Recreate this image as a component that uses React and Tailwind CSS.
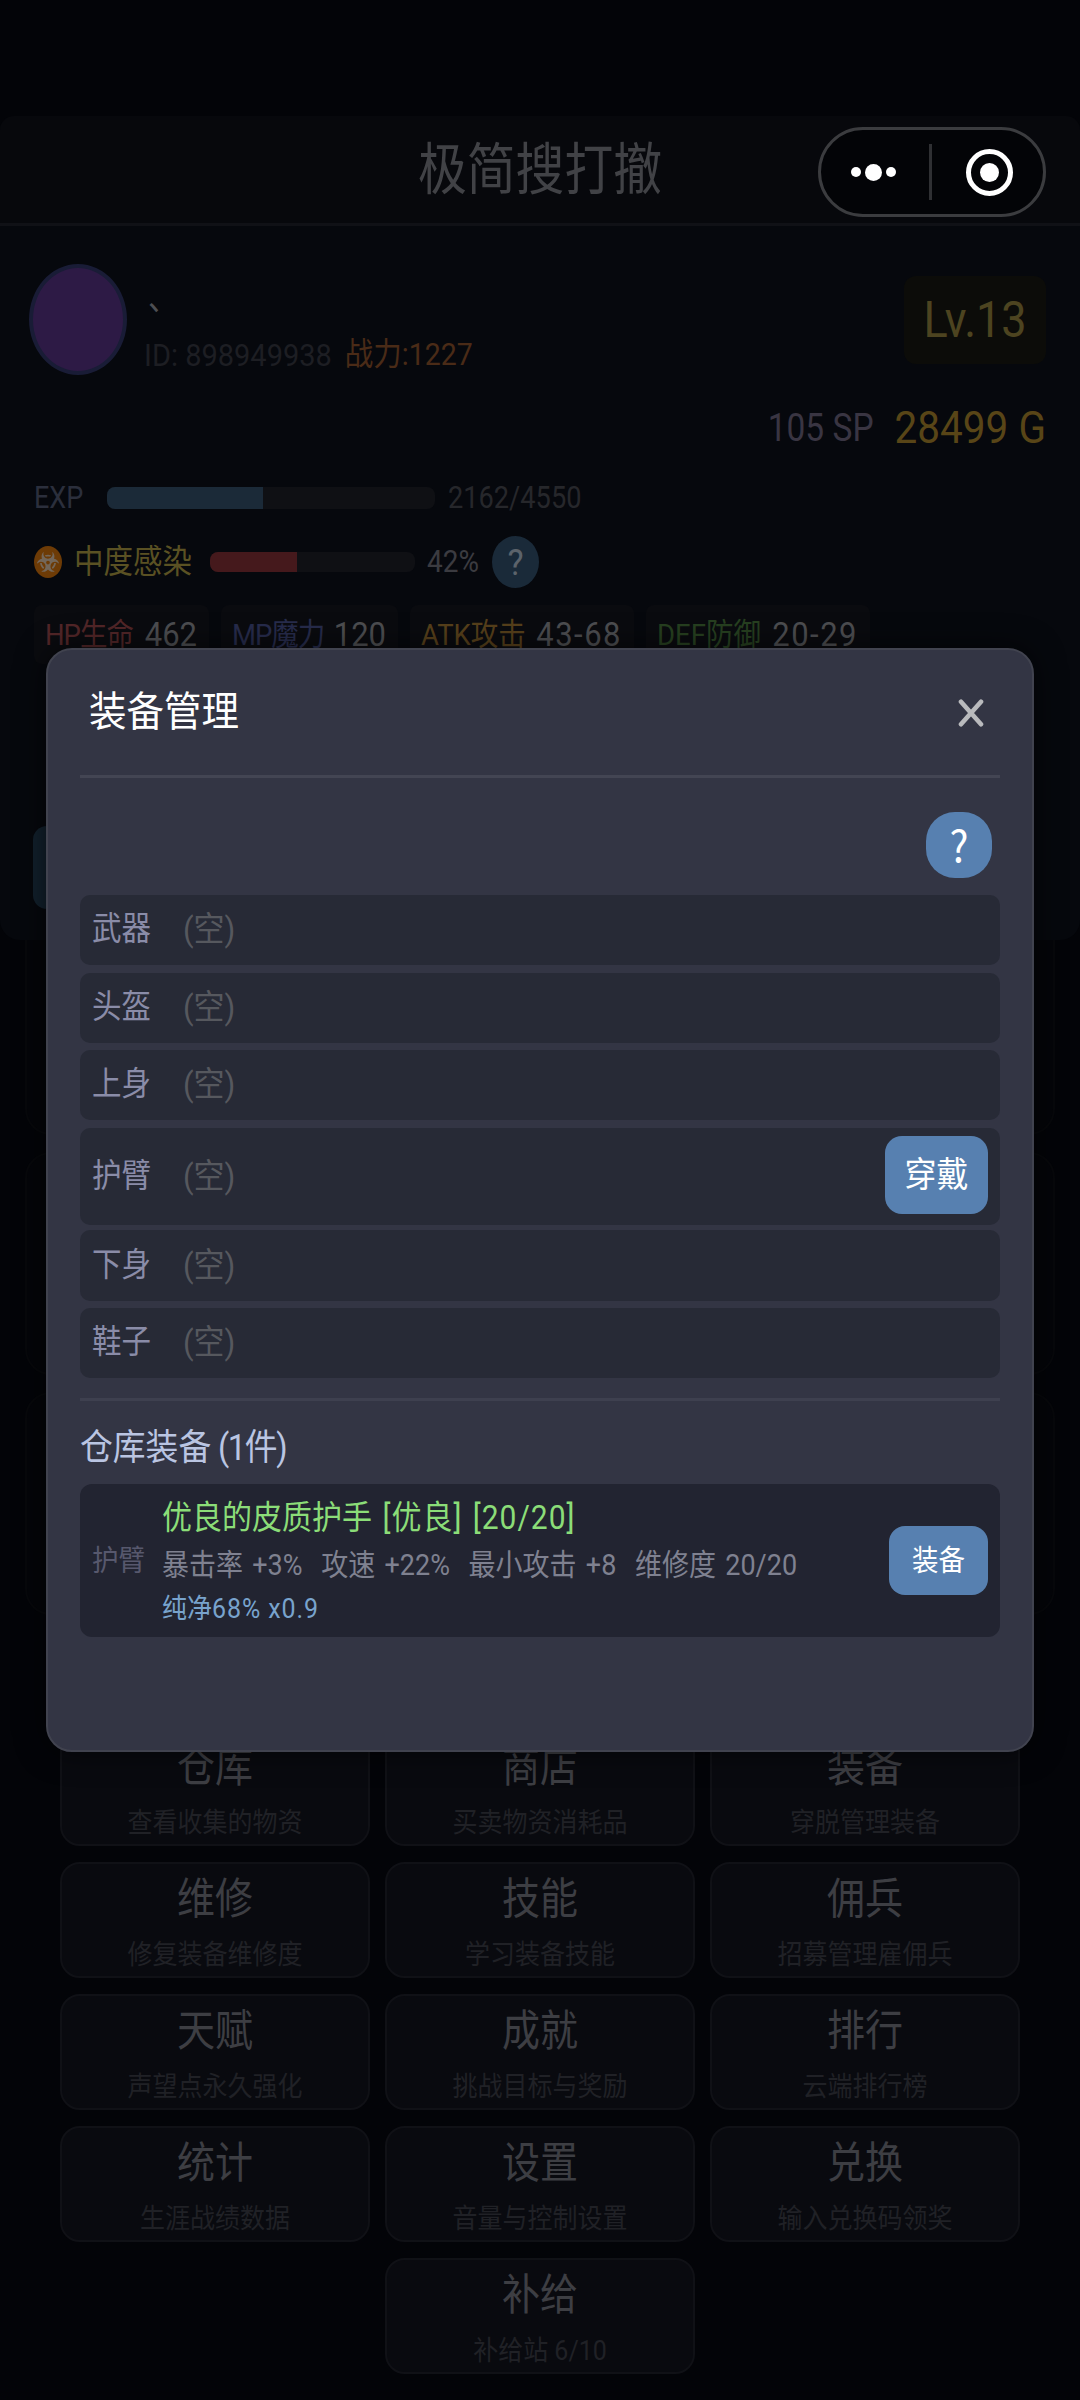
import clsx from 'clsx'
import { FaBiohazard } from 'react-icons/fa'

const STATS = [
  { label: 'HP生命', value: '462', color: 'text-[#522628] tracking-[-1px]', width: 'w-[175px]' },
  { label: 'MP魔力', value: '120', color: 'text-[#272c4c] tracking-[-1px]', width: 'w-[177px]' },
  { label: 'ATK攻击', value: '43-68', color: 'text-[#57401b]', width: 'w-[224px]', range: true },
  { label: 'DEF防御', value: '20-29', color: 'text-[#274020]', width: 'w-[224px]', range: true },
]

const SLOTS = [
  { name: '武器', size: 'h-[70px] mb-2' },
  { name: '头盔', size: 'h-[70px] mb-[7px]' },
  { name: '上身', size: 'h-[70px] mb-2' },
  { name: '护臂', size: 'h-[97px] mb-[5px]', wearable: true },
  { name: '下身', size: 'h-[71px] mb-[7px]' },
  { name: '鞋子', size: 'h-[70px]' },
]

const MENU = [
  { title: '仓库', desc: '查看收集的物资' },
  { title: '商店', desc: '买卖物资消耗品' },
  { title: '装备', desc: '穿脱管理装备' },
  { title: '维修', desc: '修复装备维修度' },
  { title: '技能', desc: '学习装备技能' },
  { title: '佣兵', desc: '招募管理雇佣兵' },
  { title: '天赋', desc: '声望点永久强化' },
  { title: '成就', desc: '挑战目标与奖励' },
  { title: '排行', desc: '云端排行榜' },
  { title: '统计', desc: '生涯战绩数据' },
  { title: '设置', desc: '音量与控制设置' },
  { title: '兑换', desc: '输入兑换码领奖' },
  { title: '补给', desc: '补给站 6/10', last: true },
]

function Text({ className, tall, children }) {
  return (
    <span
      className={clsx(
        'inline-block shrink-0 leading-none whitespace-pre',
        tall ? 'scale-y-[1.15]' : 'scale-y-110',
        className
      )}
    >
      {children}
    </span>
  )
}

function Capsule() {
  return (
    <div className="absolute left-[818px] top-[127px] flex h-[90px] w-[228px] items-center rounded-full border-[3px] border-[#3b3c3f] bg-[#030407]">
      <div className="flex w-[108px] items-center justify-center gap-1 pr-[3px]">
        <span className="size-[10px] rounded-full bg-white" />
        <span className="size-[17px] rounded-full bg-white" />
        <span className="size-[10px] rounded-full bg-white" />
      </div>
      <span className="h-14 w-[3px] bg-[#2f3033]" />
      <div className="flex flex-1 items-center justify-center pl-[4px]">
        <span className="flex size-[47px] items-center justify-center rounded-full border-[5px] border-white">
          <span className="size-[19px] rounded-full bg-white" />
        </span>
      </div>
    </div>
  )
}

function Profile() {
  return (
    <section className="h-[714px] rounded-b-[20px] bg-[#06080d] pt-[38px]">
      <div className="flex h-[111px] items-center pl-[29px] pr-[34px]">
        <div className="h-[111px] w-[98px] rounded-[50%] border-4 border-[#191c36] bg-[#2d1a45]" />
        <div className="ml-[17px] flex-1 pt-[14px]">
          <Text className="block h-[30px] pl-[4px] text-[30px] text-[#4d4e52]">、</Text>
          <div className="mt-[25px] flex items-center gap-[13px]">
            <Text className="text-[29px] text-[#1d1e23]">ID: 898949938</Text>
            <Text className="text-[28.5px] text-[#4a2b17]">战力:1227</Text>
          </div>
        </div>
        <div className="flex h-[88px] w-[142px] items-center justify-center rounded-xl bg-[#0c0c09]">
          <Text className="text-[45px] text-[#4d4420]">Lv.13</Text>
        </div>
      </div>

      <div className="mt-[33px] flex h-10 items-center justify-end gap-[21px] pr-[34px]">
        <Text tall className="text-[33.5px] text-[#393542]">105 SP</Text>
        <Text className="text-[40.5px] text-[#584517]">28499 G</Text>
      </div>

      <div className="mt-[35px] flex h-[30px] items-center pl-[34px]">
        <Text tall className="w-[73px] text-[27px] text-[#2b2f3c]">EXP</Text>
        <div className="h-[22px] w-[328px] overflow-hidden rounded-lg bg-[#0f1014]">
          <div className="h-full bg-[#1b2a38]" style={{ width: `${(2162 / 4550) * 100}%` }} />
        </div>
        <Text tall className="ml-[13px] mt-px text-[27.2px] text-[#26272b]">2162/4550</Text>
      </div>

      <div className="mt-[23px] flex h-[52px] items-center pl-[34px]">
        <div className="flex h-8 w-7 shrink-0 items-center justify-center rounded-[50%] bg-[#6d3b06]">
          <FaBiohazard className="size-[22px] text-[#73675a]" />
        </div>
        <Text className="ml-3 mt-[2px] w-[136px] text-[29.5px] text-[#5a5123]">中度感染</Text>
        <div className="h-5 w-[205px] overflow-hidden rounded-lg bg-[#0f1014]">
          <div className="h-full bg-[#45191c]" style={{ width: '42.5%' }} />
        </div>
        <Text tall className="ml-3 w-[65px] text-[28px] text-[#3b3b40]">42%</Text>
        <div className="flex h-[52px] w-[47px] items-center justify-center rounded-[50%] bg-[#1a2a39]">
          <Text className="text-[34px] text-[#5c636b]">?</Text>
        </div>
      </div>

      <div className="mt-[17px] flex gap-3 pl-[34px]">
        {STATS.map((s) => (
          <div
            key={s.label}
            className={clsx('flex h-[59px] items-center justify-between rounded-lg bg-[#0a0b0f] pl-[11px] pr-3', s.width)}
          >
            <Text className={clsx('text-[27.5px]', s.color)}>{s.label}</Text>
            <Text className={clsx('text-[31px] text-[#4d4e51]', s.range && 'tracking-[1.5px]')}>{s.value}</Text>
          </div>
        ))}
      </div>

      <div className="ml-[33px] mt-[162px] h-[83px] w-[220px] rounded-[14px] bg-[#12202c]" />
    </section>
  )
}

function MenuGrid() {
  return (
    <div className="mt-[115px] grid grid-cols-[310px_310px_310px] justify-center gap-x-[15px] gap-y-[16.1px]">
      {MENU.map((m) => (
        <div
          key={m.title}
          className={clsx(
            'flex h-[116px] flex-col items-center rounded-[20px] border-2 border-[#101116] bg-[#090a0f] pt-[16px]',
            m.last && 'col-start-2'
          )}
        >
          <Text tall className="text-[38px] text-[#3d3e43]">{m.title}</Text>
          <Text className="mt-[24px] text-[25px] text-[#202126]">{m.desc}</Text>
        </div>
      ))}
    </div>
  )
}

function EquipmentModal() {
  return (
    <div className="absolute left-[46px] top-[648px] h-[1104px] w-[988px] rounded-[26px] border-2 border-[#41434f] bg-[#333544] px-8 shadow-[0_0_30px_rgba(0,0,0,0.6)]">
      <div className="flex h-[128px] items-center justify-between border-b-3 border-[#434553] pl-[9px] pr-4">
        <Text className="mt-px text-[37.5px] text-white">装备管理</Text>
        <svg viewBox="0 0 26 28" className="h-7 w-[26px]" stroke="#b9babd" strokeWidth="4.6" strokeLinecap="round">
          <path d="M3 2.8 23 25.2M23 2.8 3 25.2" />
        </svg>
      </div>

      <div className="mt-[34px] flex justify-end pr-2">
        <button className="flex size-[66px] items-center justify-center rounded-[29px] bg-[#5780b0]">
          <Text className="mb-1 font-['Noto_Sans_CJK_SC',sans-serif] text-[40px] text-white">?</Text>
        </button>
      </div>

      <div className="mt-[17px]">
        {SLOTS.map((slot) => (
          <div key={slot.name} className={clsx('flex items-center rounded-[10px] bg-[#272a36] px-3', slot.size)}>
            <Text className="w-[91px] text-[29.5px] text-[#8a8ca8]">{slot.name}</Text>
            <Text className="-mt-px text-[31px] text-[#56585e]">(空)</Text>
            {slot.wearable && (
              <button className="mb-[3px] ml-auto flex h-[78px] w-[103px] items-center justify-center rounded-[17px] bg-[#5780b0]">
                <Text className="text-[32px] text-white">穿戴</Text>
              </button>
            )}
          </div>
        ))}
      </div>

      <div className="mt-5 border-t-3 border-[#3e404f] pt-[31px]">
        <Text className="block text-[32.8px] text-[#bac5e2]">
          仓库装备<span className="tracking-[-1.4px]"> (1件)</span>
        </Text>
      </div>

      <div className="mt-[18px] flex h-[153px] items-center rounded-xl bg-[#222431] px-3">
        <Text className="mt-px w-[70px] text-[26.5px] text-[#57586d]">护臂</Text>
        <div className="flex h-full flex-1 flex-col items-start pt-[19px]">
          <Text className="text-[30px] text-[#8bdd78]">
            优良的皮质护手<span className="tracking-[1px] [word-spacing:2px]"> [优良] [20/20]</span>
          </Text>
          <Text className="mt-[19px] text-[27px] text-[#7f8190] [word-spacing:2.6px]">
            暴击率 +3%{'  '}攻速 +22%{'  '}最小攻击 +8{'  '}维修度 20/20
          </Text>
          <Text className="mt-[17px] text-[25px] text-[#78a3cd]">
            纯净<span className="tracking-[0.9px]">68% x0.9</span>
          </Text>
        </div>
        <button className="flex h-[69px] w-[99px] items-center justify-center rounded-[16px] bg-[#5780b0]">
          <Text className="mt-[2px] text-[26.5px] text-white">装备</Text>
        </button>
      </div>
    </div>
  )
}

export default function App() {
  return (
    <div className="relative h-[2400px] w-[1080px] overflow-hidden bg-[#030408] pt-[116px] font-['Roboto','Noto_Sans_CJK_SC',sans-serif]">
      <header className="flex h-[110px] items-center justify-center rounded-t-[14px] border-b-3 border-[#101116] bg-[#07080c] pt-[4px]">
        <Text tall className="text-[48.8px] text-[#414246]">极简搜打撤</Text>
      </header>
      <Profile />
      {/* panels tucked under the dialog */}
      <div className="mx-auto flex w-[1030px] flex-col gap-[17px]">
        <div className="h-[195px] rounded-b-[26px] border-2 border-t-0 border-[#07080b] bg-[#040509]" />
        <div className="h-[223px] rounded-[26px] border-2 border-[#07080b] bg-[#040509]" />
        <div className="h-[223px] rounded-[26px] border-2 border-[#07080b] bg-[#040509]" />
      </div>
      <MenuGrid />
      <EquipmentModal />
      <Capsule />
    </div>
  )
}
